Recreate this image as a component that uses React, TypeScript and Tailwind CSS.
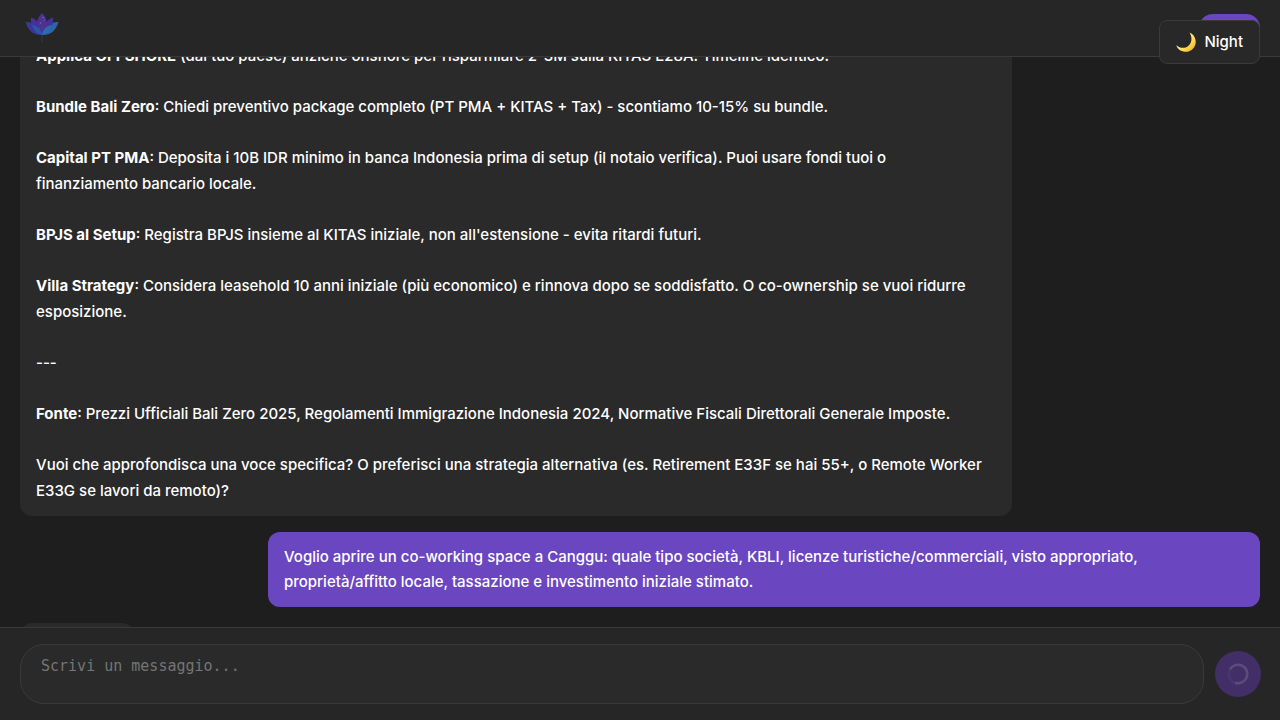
import type { ReactNode } from "react";

function LotusLogo() {
  return (
    <svg viewBox="0 2 36 36" className="h-9 w-9" aria-hidden="true">
      <path d="M18 26V34.500" stroke="#37306b" strokeWidth="1" />
      <path d="M1.500 14C8 13.500 15 17 18 27C9 27.500 4 22 1.500 14Z" fill="#3a3798" />
      <path d="M34.500 14C28 13.500 21 17 18 27C27 27.500 32 22 34.500 14Z" fill="#2c66a6" />
      <path d="M7 9.500C14 12 18 18 18 27C10 24 6 17 7 9.500Z" fill="#46309a" />
      <path d="M29 9.500C22 12 18 18 18 27C26 24 30 17 29 9.500Z" fill="#43329b" />
      <path d="M18 5C11.500 11 11.500 20 18 27C24.500 20 24.500 11 18 5Z" fill="#4f3192" />
      <path d="M8 17C13 17.500 17 21 18 27C12.500 26 9.500 22 8 17Z" fill="#2a58a8" />
      <path d="M28 17C23 17.500 19 21 18 27C23.500 26 26.500 22 28 17Z" fill="#2b6bb0" />
      <circle cx="19" cy="9.500" r="0.800" fill="#5b78b4" />
      <circle cx="16.500" cy="15" r="0.700" fill="#3e8db5" />
      <circle cx="20" cy="12.500" r="0.500" fill="#7668c5" />
    </svg>
  );
}

function Moon() {
  return (
    <svg viewBox="0 0 20 20" className="h-5 w-5" aria-hidden="true">
      <defs>
        <linearGradient id="moon" x1="0" y1="0" x2="1" y2="1">
          <stop offset="0.3" stopColor="#fff0a0" />
          <stop offset="0.65" stopColor="#ffd84d" />
          <stop offset="1" stopColor="#e9a51e" />
        </linearGradient>
      </defs>
      <path
        d="M13.500 0.500C18 2.500 20.500 7 19.500 12C18.300 17 13.800 20.300 9 19.800C4.500 19.300 1.300 17 0.300 13.300C4 16.500 9 16.800 12.500 13.700C16.200 10.300 16.300 5 13.500 0.500Z"
        fill="url(#moon)"
      />
    </svg>
  );
}

const paragraphs: { title?: string; text: ReactNode }[] = [
  {
    title: "Applica OFFSHORE",
    text: " (dal tuo paese) anziché onshore per risparmiare 2-3M sulla KITAS E28A. Timeline identico.",
  },
  {
    title: "Bundle Bali Zero",
    text: ": Chiedi preventivo package completo (PT PMA + KITAS + Tax) - scontiamo 10-15% su bundle.",
  },
  {
    title: "Capital PT PMA",
    text: (
      <>
        : Deposita i 10B IDR minimo in banca Indonesia prima di setup (il notaio verifica). Puoi usare fondi tuoi o
        <br />
        finanziamento bancario locale.
      </>
    ),
  },
  {
    title: "BPJS al Setup",
    text: ": Registra BPJS insieme al KITAS iniziale, non all'estensione - evita ritardi futuri.",
  },
  {
    title: "Villa Strategy",
    text: ": Considera leasehold 10 anni iniziale (più economico) e rinnova dopo se soddisfatto. O co-ownership se vuoi ridurre esposizione.",
  },
  { text: "---" },
  {
    title: "Fonte",
    text: ": Prezzi Ufficiali Bali Zero 2025, Regolamenti Immigrazione Indonesia 2024, Normative Fiscali Direttorali Generale Imposte.",
  },
  {
    text: "Vuoi che approfondisca una voce specifica? O preferisci una strategia alternativa (es. Retirement E33F se hai 55+, o Remote Worker E33G se lavori da remoto)?",
  },
];

export default function App() {
  return (
    <div className="flex h-screen flex-col overflow-hidden bg-[#1e1e1e] font-['Inter',sans-serif] font-medium text-white">
      <header className="relative z-10 flex shrink-0 items-center justify-between border-b border-[#3a3a3a] bg-[#262626] px-5 py-2">
        <div className="flex h-10 items-center pl-1">
          <LotusLogo />
        </div>
        <button type="button" aria-label="Menu" className="h-7 w-[61px] rounded-full bg-[#6b46c1]" />
      </header>

      <button
        type="button"
        className="fixed top-5 right-5 z-20 flex h-11 items-center gap-2 rounded-lg border border-[#3a3a3a] bg-[#282828] px-4 text-[15px]"
      >
        <Moon />
        Night
      </button>

      <main className="min-h-0 flex-1 overflow-hidden px-5">
        <div className="-mt-[26px] flex flex-col gap-4 text-[15px]">
          <article className="flex w-4/5 flex-col gap-[25px] rounded-xl bg-[#2a2a2a] px-4 py-3 leading-[26px]">
            {paragraphs.map((p, i) => (
              <p key={i}>
                {p.title && <strong className="font-bold">{p.title}</strong>}
                {p.text}
              </p>
            ))}
          </article>
          <article className="w-4/5 self-end rounded-xl bg-[#6b46c1] px-4 pt-3 pb-[13px] leading-[25px]">
            Voglio aprire un co-working space a Canggu: quale tipo società, KBLI, licenze turistiche/commerciali, visto
            appropriato,
            <br />
            proprietà/affitto locale, tassazione e investimento iniziale stimato.
          </article>
          <div className="h-12 w-[114px] shrink-0 rounded-xl bg-[#2a2a2a]" />
        </div>
      </main>

      <footer className="relative z-10 flex shrink-0 items-center gap-[11px] border-t border-[#3a3a3a] bg-[#262626] py-4 pr-[19px] pl-5">
        <textarea
          aria-label="Messaggio"
          placeholder="Scrivi un messaggio..."
          className="h-[60px] min-w-0 flex-1 resize-none rounded-3xl border border-[#3a3a3a] bg-[#2a2a2a] px-5 py-3 font-['DejaVu_Sans_Mono',monospace] text-[15px] leading-[18px] font-normal placeholder:text-[#757575]"
        />
        <button
          type="button"
          disabled
          aria-label="Invia"
          className="flex h-[46px] w-[46px] shrink-0 items-center justify-center rounded-full bg-[#432f68]"
        >
          <svg viewBox="0 0 22 22" className="h-[22px] w-[22px]" fill="none" strokeWidth="2.500" aria-hidden="true">
            <circle cx="11" cy="11" r="9.250" stroke="#4a3476" />
            <path d="M2.990 6.380A9.250 9.250 0 1 1 8 19.750" stroke="#5e4b7c" />
          </svg>
        </button>
      </footer>
    </div>
  );
}
